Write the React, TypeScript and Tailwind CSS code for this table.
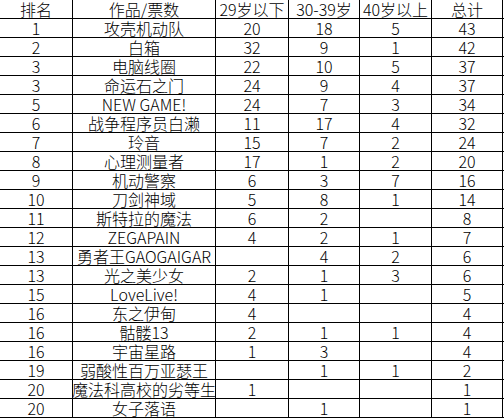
const rows: (string | number)[][] = [
  [1, "攻壳机动队", 20, 18, 5, 43],
  [2, "白箱", 32, 9, 1, 42],
  [3, "电脑线圈", 22, 10, 5, 37],
  [3, "命运石之门", 24, 9, 4, 37],
  [5, "NEW GAME!", 24, 7, 3, 34],
  [6, "战争程序员白濑", 11, 17, 4, 32],
  [7, "玲音", 15, 7, 2, 24],
  [8, "心理测量者", 17, 1, 2, 20],
  [9, "机动警察", 6, 3, 7, 16],
  [10, "刀剑神域", 5, 8, 1, 14],
  [11, "斯特拉的魔法", 6, 2, "", 8],
  [12, "ZEGAPAIN", 4, 2, 1, 7],
  [13, "勇者王GAOGAIGAR", "", 4, 2, 6],
  [13, "光之美少女", 2, 1, 3, 6],
  [15, "LoveLive!", 4, 1, "", 5],
  [16, "东之伊甸", 4, "", "", 4],
  [16, "骷髅13", 2, 1, 1, 4],
  [16, "宇宙星路", 1, 3, "", 4],
  [19, "弱酸性百万亚瑟王", "", 1, 1, 2],
  [20, "魔法科高校的劣等生", 1, "", "", 1],
  [20, "女子落语", "", 1, "", 1],
];

const header = ["排名", "作品/票数", "29岁以下", "30-39岁", "40岁以上", "总计"];

// column widths include the 1px right border
const widths = ["w-[73px]", "w-[143px]", "w-[73px]", "w-[71px]", "w-[72px]", "w-[71px]"];

function Row({ cells }: { cells: (string | number)[] }) {
  return (
    <div className="flex h-[19px] border-b border-black">
      {cells.map((c, i) => (
        <div
          key={i}
          className={`${widths[i]} shrink-0 border-r border-black flex items-end justify-center overflow-visible whitespace-nowrap leading-[18px]`}
        >
          {c}
        </div>
      ))}
    </div>
  );
}

export default function App() {
  return (
    <div
      className="w-[504px] h-[418px] bg-white text-black text-[16px] font-light overflow-hidden"
      style={{ fontFamily: '"Noto Sans CJK SC", "Noto Sans", sans-serif' }}
    >
      <Row cells={header} />
      {rows.map((r, i) => (
        <Row key={i} cells={r} />
      ))}
    </div>
  );
}
